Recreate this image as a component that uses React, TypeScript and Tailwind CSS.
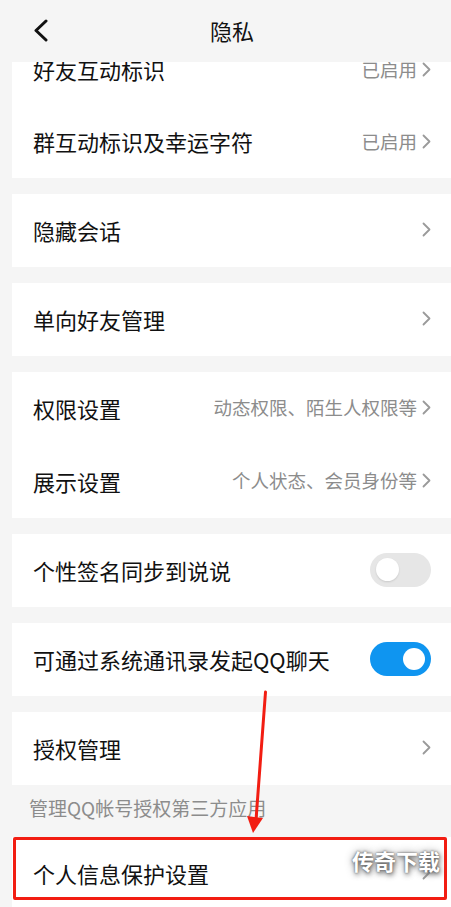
import React from "react";

const Chevron = () => (
  <svg width="9" height="15" viewBox="0 0 9 15" className="shrink-0">
    <polyline points="1.5,1.5 7.5,7.5 1.5,13.5" fill="none" stroke="#9a9a9a" strokeWidth="1.8" strokeLinecap="round" strokeLinejoin="round" />
  </svg>
);

const Toggle = ({ on }: { on: boolean }) => (
  <div className={on ? "w-[61px] h-[34px] rounded-full bg-[#0f95f0] flex items-center justify-end px-[6px]" : "w-[61px] h-[34px] rounded-full bg-[#e6e6e6] flex items-center justify-start px-[6px]"}>
    <div className={on ? "w-[22px] h-[22px] rounded-full bg-white" : "w-[23px] h-[23px] rounded-full bg-white shadow-[0_1px_2px_rgba(0,0,0,0.12)]"} />
  </div>
);

const Row = ({ label, value, right, h = "h-[73px]" }: { label: string; value?: string; right?: React.ReactNode; h?: string }) => (
  <div className={`${h} flex items-center justify-between pl-[21px] pr-[20px] pb-[2px]`}>
    <span className="text-[22px] leading-none text-[#111]">{label}</span>
    {right ?? (
      <div className="flex items-center gap-[5px]">
        {value && <span className="text-[18.5px] leading-none text-[#8c8c8c]">{value}</span>}
        <Chevron />
      </div>
    )}
  </div>
);

export default function App() {
  return (
    <div className="relative w-[451px] h-[907px] overflow-hidden bg-[#f5f5f5] font-['Noto_Sans_CJK_SC','Noto_Sans',sans-serif]">
      <div className="relative z-10 h-[62px] bg-[#f5f5f5] flex items-center">
        <svg width="20" height="24" viewBox="0 0 20 24" className="ml-[31px] -mt-[3px]">
          <polyline points="15,3 5,12.5 15,22" fill="none" stroke="#111" strokeWidth="3" strokeLinecap="round" strokeLinejoin="round" />
        </svg>
        <div className="flex-1 text-center text-[22px] leading-none text-[#111] pl-[13px] pr-[51px] pb-[3px]">隐私</div>
      </div>

      <div className="-mt-[28px] pl-3 flex flex-col">
        <div className="bg-white">
          <Row h="h-[72px]" label="好友互动标识" value="已启用" />
          <Row h="h-[72px]" label="群互动标识及幸运字符" value="已启用" />
        </div>
        <div className="bg-white mt-4">
          <Row label="隐藏会话" />
        </div>
        <div className="bg-white mt-4">
          <Row label="单向好友管理" />
        </div>
        <div className="bg-white mt-4">
          <Row label="权限设置" value="动态权限、陌生人权限等" />
          <Row label="展示设置" value="个人状态、会员身份等" />
        </div>
        <div className="bg-white mt-4">
          <Row label="个性签名同步到说说" right={<Toggle on={false} />} />
        </div>
        <div className="bg-white mt-4">
          <Row label="可通过系统通讯录发起QQ聊天" right={<Toggle on={true} />} />
        </div>
        <div className="bg-white mt-4">
          <Row label="授权管理" />
        </div>
        <div className="h-[52px] flex items-center pl-[17px] pb-[7px] text-[19px] leading-none text-[#8c8c8c]">管理QQ帐号授权第三方应用</div>
        <div className="bg-white">
          <Row label="个人信息保护设置" />
        </div>
      </div>

      <div className="absolute left-[13px] top-[837px] w-[434px] h-[63px] border-[3px] border-[#f21d12] rounded-[2px] pointer-events-none" />

      <svg className="absolute left-0 top-0 pointer-events-none" width="451" height="907" viewBox="0 0 451 907">
        <line x1="265.5" y1="692" x2="256" y2="820" stroke="#f21d12" strokeWidth="3" strokeLinecap="round" />
        <polygon points="247,816 263,818 253,833" fill="#f21d12" />
      </svg>

      <div className="absolute left-[352px] top-[849px] text-[22px] leading-none font-bold text-white [text-shadow:0_0_2px_#555,1px_2px_5px_#666,0_0_8px_#999] font-['Noto_Sans_CJK_SC',sans-serif]">传奇下载</div>
    </div>
  );
}
